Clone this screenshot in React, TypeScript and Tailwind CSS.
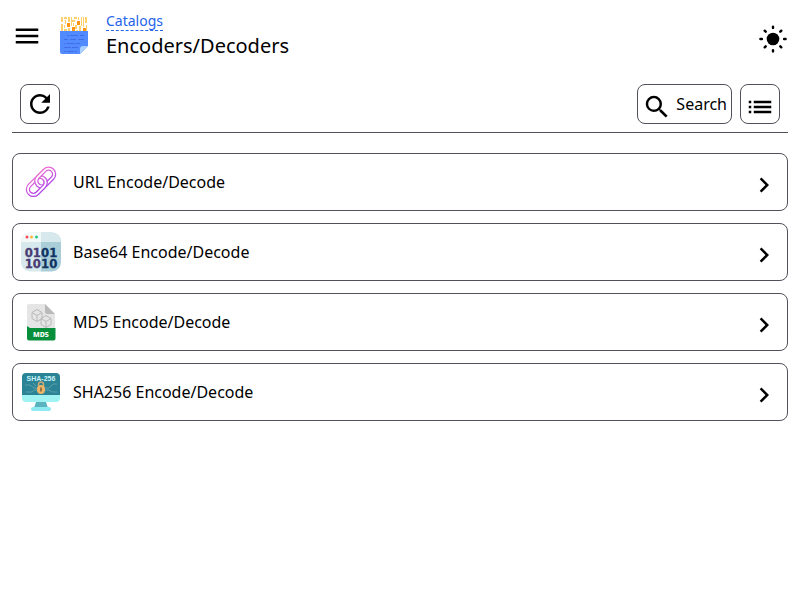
import React from "react";
import { MdChevronRight, MdList, MdMenu, MdRefresh, MdSearch } from "react-icons/md";

function CatalogLogo() {
  return (
    <svg viewBox="0 0 40 40" className="size-10 shrink-0" aria-hidden="true">
      <path
        fill="#ffd06b"
        d="M7 1h2v5H7zM7 8h2v7H7zM10 1h3v2h-3zM11 4h1v4h-1zM14 1h2v5h-2zM17 1h1v9h-1zM20 1h3v2h-3zM21 9h2v4h-2zM24 1h1v3h-1zM27 1h1v9h-1zM29 1h1v10h-1zM31 1h2v6h-2zM32 9h1v6h-1zM14 12h2v3h-2zM22 14h2v1h-2zM25 10h2v5h-2zM10 13h3v2h-3zM18 4h3v2h-3zM10 9h1v3h-1zM19 7h1v3h-1z"
      />
      <path fill="#ff9413" d="M13 7h3v4h-3zM23 5h3v4h-3zM18 11h3v4h-3zM29 12h3v3h-3z" />
      <path fill="#518bff" d="M6 15h28v15l-8 8H8a2 2 0 0 1-2-2z" />
      <path fill="#a9d0ff" d="M34 30l-8 8v-5a3 3 0 0 1 3-3z" />
      <path
        stroke="#416fe4"
        d="M13 19.500h2m1 0h8m2 0h4M10 23.500h4m2 0h6m2 0h6M10 27.500h1m1 0h9m1 0h4M10 31.500h7m1 0h6M10 35.500h2m1 0h7m1 0h2"
      />
    </svg>
  );
}

function SunIcon() {
  return (
    <svg viewBox="0 0 30 30" width="30" height="30" aria-hidden="true">
      <circle cx="15" cy="15" r="6.300" fill="currentColor" />
      <path
        stroke="currentColor"
        strokeWidth="2.400"
        strokeLinecap="round"
        d="M15 2.600v1.300M15 26.100v1.300M2.400 15h1.500M26.100 15h1.500M6.700 6.700l1 1M22.300 22.300l1 1M6.700 23.300l1-1M22.300 7.700l1-1"
      />
    </svg>
  );
}

function ChainRing({ cx, cy }: { cx: number; cy: number }) {
  return (
    <g fill="none" transform={`translate(${cx} ${cy}) rotate(-45)`}>
      <rect x="-10.300" y="-5.500" width="20.600" height="11" rx="5.500" stroke="#ffffff" strokeWidth="4.400" />
      <rect x="-10.300" y="-5.500" width="20.600" height="11" rx="5.500" stroke="#000000" strokeWidth="1.800" />
    </g>
  );
}

function LinkArt() {
  return (
    <svg viewBox="0 0 40 40" className="size-10 shrink-0" aria-hidden="true">
      <defs>
        <linearGradient id="chain-tint" gradientUnits="userSpaceOnUse" x1="12" y1="8" x2="28" y2="32">
          <stop offset="0" stopColor="#ff78c8" />
          <stop offset="1" stopColor="#9a3cf5" />
        </linearGradient>
        <clipPath id="chain-front">
          <path d="M40 0v40H0z" />
        </clipPath>
        <mask id="chain-shape" maskUnits="userSpaceOnUse" x="0" y="0" width="40" height="40">
          <ChainRing cx={15.8} cy={24} />
          <ChainRing cx={24.2} cy={15.6} />
          <g clipPath="url(#chain-front)">
            <ChainRing cx={15.8} cy={24} />
          </g>
        </mask>
      </defs>
      <rect width="40" height="40" fill="url(#chain-tint)" mask="url(#chain-shape)" />
    </svg>
  );
}

function BinaryArt() {
  return (
    <svg viewBox="0 0 40 40" className="size-10 shrink-0" aria-hidden="true">
      <defs>
        <clipPath id="binary-tile">
          <rect width="40" height="39" y="0.500" rx="9" />
        </clipPath>
      </defs>
      <g clipPath="url(#binary-tile)">
        <path fill="#d7e9ec" d="M0 0h20v40H0z" />
        <path fill="#a9ced8" d="M20 0h20v40H20z" />
        <path fill="#f3f8f9" d="M0 0h20v10H0z" />
        <path fill="#d7e9ec" d="M20 0h20v10H20z" />
      </g>
      <circle cx="6" cy="5" r="1.500" fill="#f8495b" />
      <circle cx="10.500" cy="5" r="1.500" fill="#f7b940" />
      <circle cx="15.500" cy="5" r="1.500" fill="#22cc86" />
      <g
        strokeWidth="0.300"
        className="font-['DejaVu_Sans_Condensed','DejaVu_Sans',sans-serif] text-[13px] font-bold"
      >
        <g fill="#493b73" stroke="#493b73" textAnchor="end">
          <text x="20" y="25">01</text>
          <text x="20" y="36">10</text>
        </g>
        <g fill="#103363" stroke="#103363">
          <text x="20" y="25">01</text>
          <text x="20" y="36">10</text>
        </g>
      </g>
    </svg>
  );
}

function Md5Art() {
  return (
    <svg viewBox="0 0 40 40" className="size-10 shrink-0" aria-hidden="true">
      <path fill="#e5e5e5" d="M8 2h16l10 10v16H6V4a2 2 0 0 1 2-2z" />
      <path fill="#b9b9bb" d="M24 2l10 10h-8a2 2 0 0 1-2-2z" />
      <path
        fill="none"
        stroke="#b9b9bb"
        d="M16 7.500l5 3v6l-5 3-5-3v-6zM11 10.500l5 3 5-3M16 13.500v6M25 13.500l5 3v6l-5 3-5-3v-6zM20 16.500l5 3 5-3M25 19.500v6"
      />
      <path fill="#078f3c" d="M6 24l3 2h25.500v10.500a2 2 0 0 1-2 2H8a2 2 0 0 1-2-2z" />
      <text
        x="20"
        y="35"
        textAnchor="middle"
        fill="#ffffff"
        className="font-['Noto_Sans',sans-serif] text-[7px] font-extrabold"
      >
        MD5
      </text>
    </svg>
  );
}

function ShaArt() {
  return (
    <svg viewBox="0 0 40 40" className="size-10 shrink-0" aria-hidden="true">
      <path fill="#2a8496" d="M5 1h30a4 4 0 0 1 4 4v18H1V5a4 4 0 0 1 4-4z" />
      <path fill="#9ff3f3" d="M1 23h38v3a4 4 0 0 1-4 4H5a4 4 0 0 1-4-4z" />
      <path fill="#5cb3c0" d="M15 30h10l2 6H13z" />
      <rect x="10" y="35" width="20" height="4" rx="2" fill="#8deaf0" />
      <path
        fill="none"
        stroke="#6ba5b0"
        strokeWidth="0.800"
        d="M4 13h5l4 3h3M5 20h6l2-2h3M36 12h-4l-4 4h-4M36 20h-5l-3-2h-4M12 11l3 3"
      />
      <path fill="none" stroke="#c9a777" strokeWidth="1.500" d="M17.500 14v-1.500a2.500 2.500 0 0 1 5 0V14" />
      <rect x="16" y="13" width="8" height="9" rx="4" fill="#efb566" />
      <path fill="#6a5640" d="M19.300 15.500h1.400v4h-1.400z" />
      <text
        x="20"
        y="9"
        textAnchor="middle"
        fill="#c9f3fa"
        className="font-['Liberation_Sans',sans-serif] text-[7px] font-bold"
      >
        SHA-256
      </text>
    </svg>
  );
}

const tools = [
  { name: "URL Encode/Decode", href: "#url", Art: LinkArt },
  { name: "Base64 Encode/Decode", href: "#base64", Art: BinaryArt },
  { name: "MD5 Encode/Decode", href: "#md5", Art: Md5Art },
  { name: "SHA256 Encode/Decode", href: "#sha256", Art: ShaArt },
];

const buttonClass =
  "flex h-10 items-center gap-1 rounded-lg border border-[#52505a] px-1";

export default function App() {
  return (
    <div className="min-h-screen bg-white px-3 font-['Noto_Sans',sans-serif] text-base text-black">
      <header className="flex h-[72px] items-center">
        <button type="button" aria-label="Menu">
          <MdMenu size={30} />
        </button>
        <div className="ml-3 flex items-center gap-3">
          <CatalogLogo />
          <div className="flex flex-col items-start">
            <a
              href="#catalogs"
              className="border-b border-dashed border-[#2563eb] text-sm leading-[18px] text-[#2563eb]"
            >
              Catalogs
            </a>
            <h1 className="text-xl leading-[30px]">Encoders/Decoders</h1>
          </div>
        </div>
        <button type="button" aria-label="Light mode" className="ml-auto pt-1.5">
          <SunIcon />
        </button>
      </header>

      <div className="mt-1 flex gap-2 border-b border-[#52505a] px-2 py-2">
        <button type="button" aria-label="Refresh" className={buttonClass}>
          <MdRefresh size={30} />
        </button>
        <button type="button" className={`ml-auto ${buttonClass}`}>
          <span className="pt-1.5">
            <MdSearch size={30} />
          </span>
          Search
        </button>
        <button type="button" aria-label="List view" className={buttonClass}>
          <span className="pt-1.5">
            <MdList size={30} />
          </span>
        </button>
      </div>

      <main className="mt-5">
        <ul className="flex flex-col gap-3">
          {tools.map(({ name, href, Art }) => (
            <li key={name}>
              <a
                href={href}
                className="flex items-center gap-3 rounded-lg border border-[#52505a] p-2"
              >
                <Art />
                <span>{name}</span>
                <span className="ml-auto pt-1.5">
                  <MdChevronRight size={30} />
                </span>
              </a>
            </li>
          ))}
        </ul>
      </main>
    </div>
  );
}
